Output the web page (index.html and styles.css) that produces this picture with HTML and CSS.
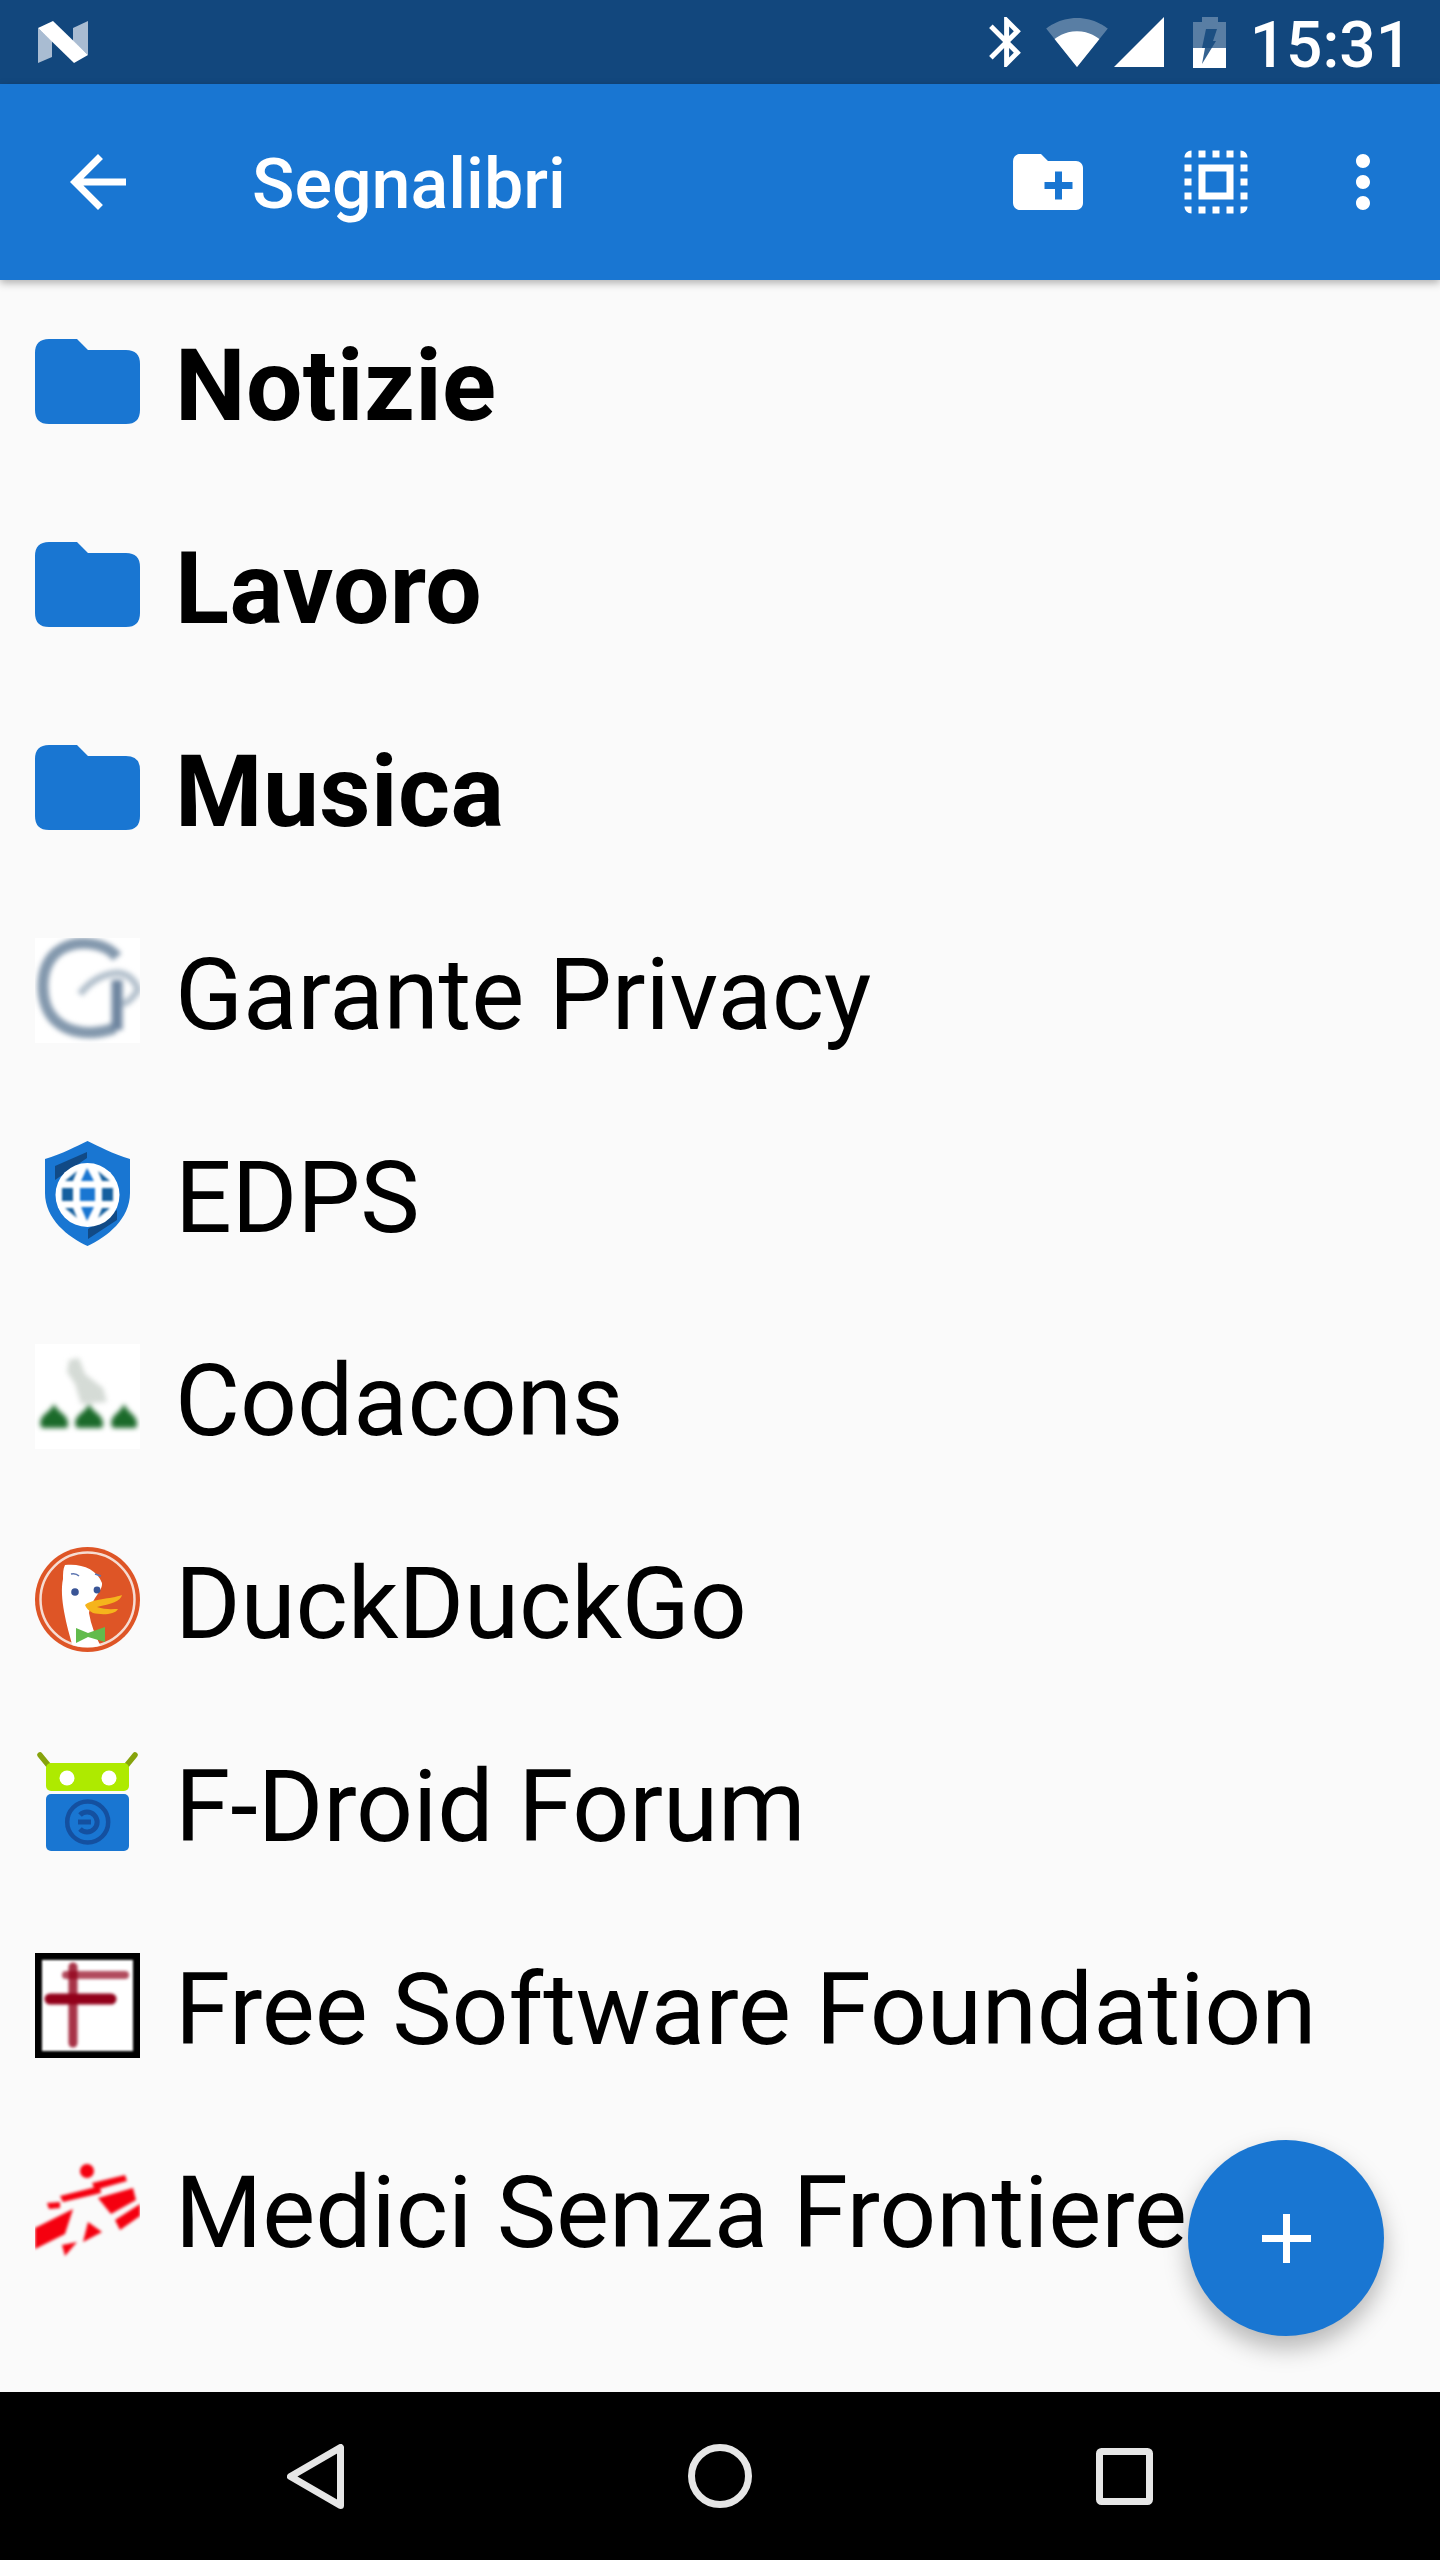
FILE: index.html
```html
<!DOCTYPE html>
<html lang="it">

<head>
    <meta charset="UTF-8">
    <meta name="viewport" content="width=device-width, initial-scale=1.0">
    <title>Segnalibri</title>
    <link rel="stylesheet" href="styles.css">
</head>

<body>
    <div class="screen">
        <div class="status-bar">
            <svg class="status-logo" viewBox="0 0 50 42">
                <path d="M0 7 14 20V36L0 42Z" fill="#a9bcd2" />
                <path d="M35 7 50 0V34L35 20Z" fill="#a9bcd2" />
                <path d="M0 7 15 0 50 34 36 42Z" fill="#fff" />
            </svg>
            <div class="status-icons">
                <svg class="status-bt" viewBox="5 2 12.71 20">
                    <path d="M17.71 7.71L12 2h-1v7.59L6.41 5 5 6.41 10.59 12 5 17.59 6.41 19 11 14.41V22h1l5.710-5.710-4.300-4.290 4.300-4.290zM13 5.830l1.880 1.880L13 9.590V5.830zm1.880 10.460L13 18.170v-3.760l1.880 1.880z" fill="#fff" />
                </svg>
                <svg class="status-wifi" viewBox=".36 3 23.28 18.5">
                    <path d="M12.010 21.490L23.640 7c-.45-.34-4.930-4-11.640-4C5.280 3 .81 6.660.36 7l11.640 14.490.01.01z" fill="#fff" fill-opacity=".3" />
                    <path d="M3.530 10.950l8.460 10.540.01.01.01-.01 8.460-10.540C20.040 10.620 16.810 8 12 8c-4.810 0-8.040 2.620-8.470 2.950z" fill="#fff" />
                </svg>
                <svg class="status-signal" viewBox="2 2 20 20">
                    <path d="M2 22h20V2z" fill="#fff" />
                </svg>
                <svg class="status-battery" viewBox="0 0 33 51">
                    <path d="M9 0H25V5H33V31H0V5H9Z" fill="#fff" fill-opacity=".3" />
                    <path d="M0 31H33V51H0Z" fill="#fff" />
                    <path d="M13 12H24L20 24H23L9 47 12 31H9Z" fill="#12477d" fill-opacity=".85" />
                </svg>
                <span class="status-time">15:31</span>
            </div>
        </div>

        <header class="toolbar">
            <svg class="toolbar-icon back-icon" viewBox="0 0 24 24">
                <path d="M20 11H7.830l5.590-5.590L12 4l-8 8 8 8 1.410-1.410L7.830 13H20v-2z" fill="#fff" />
            </svg>
            <div class="toolbar-title">Segnalibri</div>
            <svg class="toolbar-icon new-folder" viewBox="0 0 24 24">
                <path d="M20 6h-8l-2-2H4c-1.110 0-1.990.89-1.990 2L2 18c0 1.110.89 2 2 2h16c1.110 0 2-.89 2-2V8c0-1.110-.89-2-2-2zm-1 8h-3v3h-2v-3h-3v-2h3V9h2v3h3v2z" fill="#fff" />
            </svg>
            <svg class="toolbar-icon select-all" viewBox="0 0 24 24">
                <path d="M3 5h2V3c-1.100 0-2 .9-2 2zm0 8h2v-2H3v2zm4 8h2v-2H7v2zM3 9h2V7H3v2zm10-6h-2v2h2V3zm6 0v2h2c0-1.100-.9-2-2-2zM5 21v-2H3c0 1.100.9 2 2 2zm-2-4h2v-2H3v2zM9 3H7v2h2V3zm2 18h2v-2h-2v2zm8-8h2v-2h-2v2zm0 8c1.100 0 2-.9 2-2h-2v2zm0-12h2V7h-2v2zm0 8h2v-2h-2v2zm-4 4h2v-2h-2v2zm0-16h2V3h-2v2zM7 17h10V7H7v10zm2-8h6v6H9V9z" fill="#fff" />
            </svg>
            <svg class="toolbar-icon" viewBox="0 0 24 24">
                <path d="M12 8c1.100 0 2-.9 2-2s-.9-2-2-2-2 .9-2 2 .9 2 2 2zm0 2c-1.100 0-2 .9-2 2s.9 2 2 2 2-.9 2-2-.9-2-2-2zm0 6c-1.100 0-2 .9-2 2s.9 2 2 2 2-.9 2-2-.9-2-2-2z" fill="#fff" />
            </svg>
        </header>

        <main class="bookmarks">
            <div class="bookmark folder">
                <svg class="favicon" viewBox="0 0 105 105">
                    <path d="M14 10H42L53 21H91Q105 21 105 35V81Q105 95 91 95H14Q0 95 0 81V24Q0 10 14 10Z" fill="#1976d2" />
                </svg>
                <span class="bookmark-name">Notizie</span>
            </div>
            <div class="bookmark folder">
                <svg class="favicon" viewBox="0 0 105 105">
                    <path d="M14 10H42L53 21H91Q105 21 105 35V81Q105 95 91 95H14Q0 95 0 81V24Q0 10 14 10Z" fill="#1976d2" />
                </svg>
                <span class="bookmark-name">Lavoro</span>
            </div>
            <div class="bookmark folder">
                <svg class="favicon" viewBox="0 0 105 105">
                    <path d="M14 10H42L53 21H91Q105 21 105 35V81Q105 95 91 95H14Q0 95 0 81V24Q0 10 14 10Z" fill="#1976d2" />
                </svg>
                <span class="bookmark-name">Musica</span>
            </div>

            <div class="bookmark">
                <svg class="favicon" viewBox="0 0 105 105">
                    <rect width="105" height="105" fill="#fff" />
                    <g class="soft" fill="none">
                        <path d="M82 19C70 4 40 0 22 14 3 30 4 66 20 82 34 96 58 98 80 90" stroke="#8398ad" stroke-width="11" />
                        <path d="M82 42V92" stroke="#6f86a0" stroke-width="11" />
                        <path d="M45 56C56 42 68 36 82 35 92 35 100 42 103 52 98 60 94 64 88 66" stroke="#b3c0cc" stroke-width="7" />
                    </g>
                </svg>
                <span class="bookmark-name">Garante Privacy</span>
            </div>
            <div class="bookmark">
                <svg class="favicon" viewBox="0 0 105 105">
                    <path d="M52.500 0C63 5 78 13 95 18V52C95 78 72 96 52.500 105 33 96 10 78 10 52V18C27 13 42 5 52.500 0Z" fill="#1976d2" />
                    <path d="M52 11V17L20 39V25Z" fill="#114a86" />
                    <path d="M53 88 82 69V79L53 98Z" fill="#114a86" />
                    <circle cx="52.500" cy="54" r="32" fill="#fff" />
                    <g class="soft-min" fill="#1976d2">
                        <rect x="27" y="47" width="11" height="13" fill="#15609f" />
                        <rect x="45" y="47" width="15" height="13" />
                        <rect x="67" y="47" width="11" height="13" fill="#15609f" />
                        <path d="M46 40 52 27 59 40Z" />
                        <path d="M46 66H59L52 80Z" />
                        <path d="M30 40 42 30 38 40Z" fill="#15609f" />
                        <path d="M67 40 63 30 75 40Z" fill="#15609f" />
                        <path d="M30 67H38L42 77Z" fill="#15609f" />
                        <path d="M67 67H75L63 77Z" fill="#15609f" />
                    </g>
                </svg>
                <span class="bookmark-name">EDPS</span>
            </div>
            <div class="bookmark">
                <svg class="favicon" viewBox="0 0 105 105">
                    <rect width="105" height="105" fill="#fff" />
                    <g class="soft">
                        <path d="M34 16 44 14 50 30 68 44 72 58 46 60 40 40 32 28Z" fill="#d5dbd6" />
                        <path d="M19 60C22 66 26 68 30 72 33 76 34 80 32 84H7C4 80 5 76 8 72 12 68 16 66 19 60Z" fill="#1b6a2a" />
                        <path d="M54 60C57 66 61 68 65 72 68 76 69 80 67 84H42C39 80 40 76 43 72 47 68 51 66 54 60Z" fill="#1b6a2a" />
                        <path d="M89 60C92 66 95 68 99 72 102 76 103 80 101 84H78C75 80 76 76 79 72 83 68 86 66 89 60Z" fill="#1b6a2a" />
                    </g>
                </svg>
                <span class="bookmark-name">Codacons</span>
            </div>
            <div class="bookmark">
                <svg class="favicon" viewBox="0 0 105 105">
                    <circle cx="52.500" cy="52.500" r="52.500" fill="#de5526" />
                    <circle cx="52.500" cy="52.500" r="47" fill="none" stroke="#f6dcd2" stroke-width="2.500" />
                    <clipPath id="duck-clip">
                        <circle cx="52.500" cy="52.500" r="48" />
                    </clipPath>
                    <g clip-path="url(#duck-clip)">
                        <path d="M30 18C46 16 62 22 67 36 68 44 56 52 54 66 56 78 60 88 66 100H38C32 80 24 50 28 32 28 26 28 22 30 18Z" fill="#fff" />
                    </g>
                    <path d="M36 27C40 26 42 27 44 29M60 27 66 29" fill="none" stroke="#5b74b0" stroke-width="1.500" />
                    <circle cx="40" cy="45" r="3.800" fill="#3a5596" />
                    <circle cx="62" cy="43" r="3.400" fill="#3a5596" />
                    <path d="M50 58C56 52 76 52 87 48 86 54 76 57 62 60 70 63 78 62 83 62 80 68 66 68 58 66 54 64 51 61 50 58Z" fill="#f5b41c" />
                    <path d="M41 81 53 86 70 80 70 95 53 90 41 96Z" fill="#62bb4c" />
                </svg>
                <span class="bookmark-name">DuckDuckGo</span>
            </div>
            <div class="bookmark">
                <svg class="favicon" viewBox="0 0 105 105">
                    <path d="M5 5 14 16M100 5 91 16" stroke="#86a30c" stroke-width="5.500" stroke-linecap="round" />
                    <rect x="11" y="13" width="83" height="28" rx="5" fill="#aeea00" />
                    <circle cx="32" cy="28" r="7.500" fill="#fff" />
                    <circle cx="74" cy="28" r="7.500" fill="#fff" />
                    <rect x="11" y="44" width="83" height="57" rx="5" fill="#1976d2" />
                    <circle cx="52.700" cy="72" r="20.500" fill="none" stroke="#1450a0" stroke-width="4.500" />
                    <path d="M43 72H56M45 65A10 10 0 1 1 45 79" fill="none" stroke="#1450a0" stroke-width="5" />
                </svg>
                <span class="bookmark-name">F-Droid Forum</span>
            </div>
            <div class="bookmark">
                <svg class="favicon" viewBox="0 0 105 105">
                    <rect width="105" height="105" fill="#000" />
                    <rect x="7" y="7" width="91" height="91" fill="#fff" class="soft-min" />
                    <g class="soft-mid" stroke="#92001a" stroke-linecap="round">
                        <path d="M31 22H90" stroke-width="8" opacity=".7" />
                        <path d="M15 46H76" stroke-width="11" />
                        <path d="M38 14V90" stroke-width="9" opacity=".8" />
                    </g>
                </svg>
                <span class="bookmark-name">Free Software Foundation</span>
            </div>
            <div class="bookmark">
                <svg class="favicon" viewBox="0 0 105 105">
                    <g class="soft-mid" fill="#f5000f">
                        <circle cx="52" cy="15" r="7" />
                        <path d="M57 27 90 19 92 25 60 34Z" />
                        <path d="M25 40 65 30 66 37 28 46Z" />
                        <path d="M12 47 25 46 25 52 14 53Z" />
                        <path d="M63 42 98 32 101 44 76 58Z" />
                        <path d="M80 64 105 48 105 60 85 74Z" />
                        <path d="M0 72 38 53 30 78 0 93Z" />
                        <path d="M53 66 67 76 48 86Z" />
                        <path d="M27 89 42 86 30 100Z" />
                    </g>
                </svg>
                <span class="bookmark-name">Medici Senza Frontiere</span>
            </div>

            <button class="fab">
                <svg viewBox="0 0 49 49">
                    <path d="M21 0H28V21H49V28H28V49H21V28H0V21H21Z" fill="#fff" />
                </svg>
            </button>
        </main>

        <footer class="nav-bar">
            <svg class="nav-back" viewBox="0 0 57 65">
                <path d="M53.500 3.500V61.500L3.500 32.500Z" fill="none" stroke="#e6e6e6" stroke-width="7" stroke-linejoin="round" />
            </svg>
            <svg class="nav-home" viewBox="0 0 64 64">
                <circle cx="32" cy="32" r="28.500" fill="none" stroke="#e6e6e6" stroke-width="7" />
            </svg>
            <svg class="nav-recent" viewBox="0 0 57 57">
                <rect x="3.500" y="3.500" width="50" height="50" rx="2" fill="none" stroke="#e6e6e6" stroke-width="7" />
            </svg>
        </footer>
    </div>
</body>

</html>
```

FILE: styles.css
```css
* {
    box-sizing: border-box;
    margin: 0;
    padding: 0;
}

body {
    font-family: Roboto, "Liberation Sans", sans-serif;
    background-color: #fafafa;
}

.screen {
    display: flex;
    flex-direction: column;
    width: 1440px;
    height: 2560px;
    overflow: hidden;
}

/* Status bar */
.status-bar {
    display: flex;
    align-items: center;
    justify-content: space-between;
    height: 84px;
    padding: 0 28px 0 38px;
    background-color: #12477d;
}

.status-logo {
    width: 50px;
    height: 42px;
}

.status-icons {
    display: flex;
    align-items: center;
}

.status-bt {
    width: 32px;
    height: 50px;
    margin-right: 25px;
}

.status-wifi {
    width: 62px;
    height: 49px;
    margin-right: 6px;
}

.status-signal {
    width: 50px;
    height: 50px;
    margin-right: 29px;
}

.status-battery {
    width: 33px;
    height: 51px;
    margin-right: 24px;
}

.status-time {
    padding-top: 8px;
    font-size: 64px;
    font-weight: 500;
    line-height: 76px;
    color: #fff;
    white-space: nowrap;
}

/* Toolbar */
.toolbar {
    position: relative;
    z-index: 1;
    display: flex;
    align-items: center;
    height: 196px;
    padding: 0 35px 0 56px;
    background-color: #1976d2;
    box-shadow: 0 3px 8px rgba(0, 0, 0, .3);
}

.toolbar-icon {
    flex: none;
    width: 84px;
    height: 84px;
}

.back-icon {
    margin-right: 112px;
}

.toolbar-title {
    flex: 1;
    padding-top: 4px;
    font-size: 70px;
    font-weight: 500;
    color: #fff;
}

.new-folder {
    margin-right: 84px;
}

.select-all {
    margin-right: 63px;
}

/* Bookmark list */
.bookmarks {
    position: relative;
    flex: 1;
}

.bookmark {
    display: flex;
    align-items: center;
    height: 203px;
    padding-left: 35px;
}

.favicon {
    flex: none;
    width: 105px;
    height: 105px;
    margin-right: 35px;
}

.bookmark-name {
    padding-top: 8px;
    font-size: 100px;
    letter-spacing: -.1px;
    color: #000;
    white-space: nowrap;
}

.folder .bookmark-name {
    font-weight: 700;
    letter-spacing: .4px;
}

.soft {
    filter: blur(2.5px);
}

.soft-mid {
    filter: blur(1.8px);
}

.soft-min {
    filter: blur(1.2px);
}

.fab {
    position: absolute;
    right: 56px;
    bottom: 56px;
    display: flex;
    align-items: center;
    justify-content: center;
    width: 196px;
    height: 196px;
    border: none;
    border-radius: 50%;
    background-color: #1976d2;
    box-shadow: 0 12px 24px rgba(0, 0, 0, .28);
}

.fab svg {
    width: 49px;
    height: 49px;
}

/* Navigation bar */
.nav-bar {
    position: relative;
    z-index: 1;
    display: flex;
    align-items: center;
    height: 168px;
    padding-left: 287px;
    background-color: #000;
}

.nav-back {
    width: 57px;
    height: 65px;
    margin-right: 344px;
}

.nav-home {
    width: 64px;
    height: 64px;
    margin-right: 344px;
}

.nav-recent {
    width: 57px;
    height: 57px;
}
```
